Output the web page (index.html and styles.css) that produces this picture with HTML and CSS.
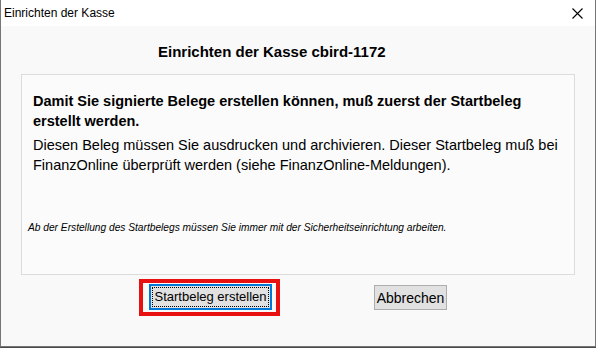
FILE: index.html
```html
<!DOCTYPE html>
<html lang="de">
<head>
    <meta charset="UTF-8">
    <title>Einrichten der Kasse</title>
    <link rel="stylesheet" href="styles.css">
</head>
<body>
    <div class="window">
        <div class="titlebar">
            <span class="title">Einrichten der Kasse</span>
            <span class="close">
                <svg width="11" height="11" viewBox="0 0 11 11">
                    <path d="M0.5 0.5 L10.5 10.5 M10.5 0.5 L0.5 10.5" stroke="#000" stroke-width="1.1" fill="none"/>
                </svg>
            </span>
        </div>
        <div class="content">
            <h2>Einrichten der Kasse cbird-1172</h2>
            <div class="panel">
                <p class="lead">Damit Sie signierte Belege erstellen können, muß zuerst der Startbeleg erstellt werden.</p>
                <p class="text">Diesen Beleg müssen Sie ausdrucken und archivieren. Dieser Startbeleg muß bei FinanzOnline überprüft werden (siehe FinanzOnline-Meldungen).</p>
                <p class="note">Ab der Erstellung des Startbelegs müssen Sie immer mit der Sicherheitseinrichtung arbeiten.</p>
            </div>
            <div class="buttons">
                <span class="mark">
                    <button type="button" class="btn default"><span class="focus">Startbeleg erstellen</span></button>
                </span>
                <button type="button" class="btn cancel">Abbrechen</button>
            </div>
        </div>
    </div>
</body>
</html>
```

FILE: styles.css
```css
body {
    margin: 0;
    background-color: #4a4a4a;
    font-family: "Liberation Sans", Arial, sans-serif;
    color: #000;
}
.window {
    width: 594px;
    height: 346px;
    border-left: 1px solid #767676;
    border-right: 1px solid #767676;
    border-bottom: 1px solid #767676;
    background-color: #f9f9f9;
    display: flex;
    flex-direction: column;
}
.titlebar {
    height: 26px;
    background-color: #fff;
    display: flex;
    align-items: center;
    justify-content: space-between;
    padding: 0 12px 0 3px;
    font-size: 12px;
}
.close {
    display: flex;
    margin-top: 1px;
}
.content {
    flex: 1;
    padding: 0 20px;
}
h2 {
    font-size: 15px;
    line-height: 20px;
    margin: 16px 0 12px 137px;
}
.panel {
    background-color: #fbfbfb;
    border: 1px solid #dcdcdc;
    height: 183px;
    padding: 16px 11px 0 11px;
}
.panel p {
    margin: 0;
}
.lead {
    font-weight: bold;
    font-size: 14.5px;
    line-height: 20px;
}
.text {
    font-size: 14.5px;
    line-height: 20px;
    margin-top: 4px !important;
}
.note {
    font-style: italic;
    font-size: 10.2px;
    line-height: 20px;
    margin-top: 43px !important;
    margin-left: -5px !important;
}
.buttons {
    display: flex;
    align-items: center;
    padding-left: 118px;
    margin-top: 4px;
}
.mark {
    border: 4px solid #e81010;
    padding: 1px 4px 2px 6px;
    display: flex;
}
.btn {
    font-family: "Liberation Sans", Arial, sans-serif;
    font-size: 14px;
    background-color: #e1e1e1;
    border: 1px solid #adadad;
    color: #000;
    white-space: nowrap;
    box-sizing: border-box;
    padding: 0;
}
.default {
    width: 123px;
    height: 26px;
    border: 2px solid #0078d7;
    padding: 0 1px;
    font-size: 13px;
}
.focus {
    display: block;
    border: 1px dotted #000;
    height: 20px;
    line-height: 18px;
    box-sizing: border-box;
}
.cancel {
    margin-left: 94px;
    width: 73px;
    height: 25px;
}
```
